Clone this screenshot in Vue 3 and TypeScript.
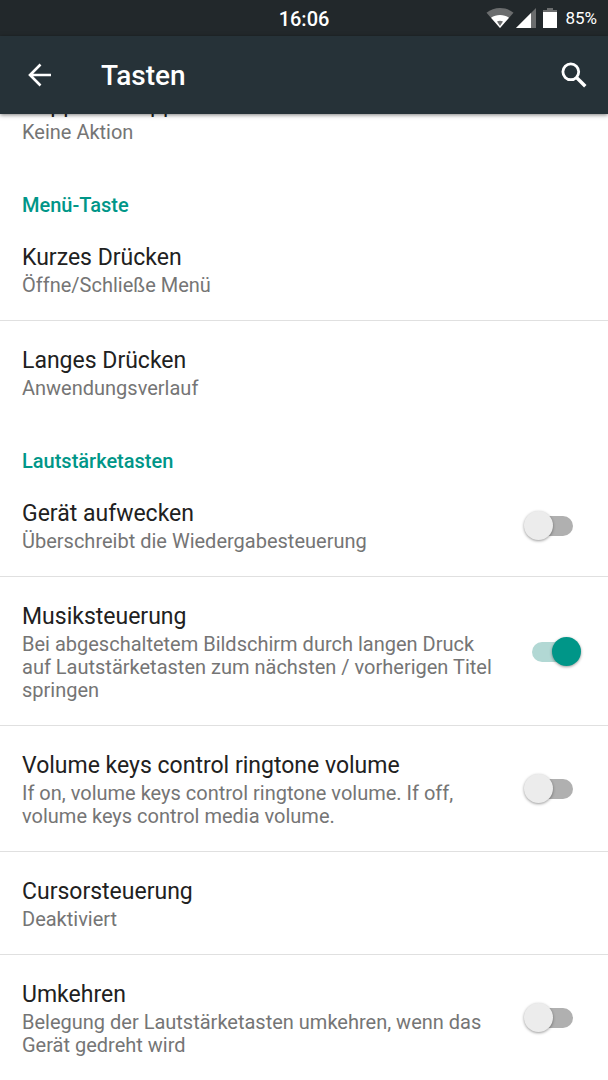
<script setup lang="ts">
import { reactive } from 'vue'

interface Preference {
  id: string
  title: string
  summary: string
  toggle?: boolean
  on?: boolean
}

interface Group {
  id: string
  heading?: string
  items: Preference[]
}

const groups = reactive<Group[]>([
  {
    id: 'home',
    items: [{ id: 'double-tap', title: 'Doppeltes Tippen', summary: 'Keine Aktion' }],
  },
  {
    id: 'menu',
    heading: 'Menü-Taste',
    items: [
      { id: 'menu-short', title: 'Kurzes Drücken', summary: 'Öffne/Schließe Menü' },
      { id: 'menu-long', title: 'Langes Drücken', summary: 'Anwendungsverlauf' },
    ],
  },
  {
    id: 'volume',
    heading: 'Lautstärketasten',
    items: [
      { id: 'wake', title: 'Gerät aufwecken', summary: 'Überschreibt die Wiedergabesteuerung', toggle: true, on: false },
      {
        id: 'music',
        title: 'Musiksteuerung',
        summary: 'Bei abgeschaltetem Bildschirm durch langen Druck auf Lautstärketasten zum nächsten / vorherigen Titel springen',
        toggle: true,
        on: true,
      },
      {
        id: 'ringtone',
        title: 'Volume keys control ringtone volume',
        summary: 'If on, volume keys control ringtone volume. If off, volume keys control media volume.',
        toggle: true,
        on: false,
      },
      { id: 'cursor', title: 'Cursorsteuerung', summary: 'Deaktiviert' },
      {
        id: 'swap',
        title: 'Umkehren',
        summary: 'Belegung der Lautstärketasten umkehren, wenn das Gerät gedreht wird',
        toggle: true,
        on: false,
      },
    ],
  },
])
</script>

<template>
  <div class="screen">
    <div class="status">
      <span class="clock">16:06</span>
      <div class="indicators">
        <svg class="wifi" viewBox="0 0 28 20" aria-hidden="true">
          <path d="M.5 4.800C8-1.500 20-1.500 27.500 4.800L14 20Z" fill="#6b6d6e" />
          <path d="M5 9.800C10 6.200 18 6.200 23 9.800L14 20Z" fill="#fff" />
          <path d="M11 13.500Q14 12 17 13.500L14 18Z" fill="#6b6d6e" />
        </svg>
        <svg class="signal" viewBox="0 0 20 20" aria-hidden="true">
          <path d="M20 0v20H0Z" fill="#6b6d6e" />
          <path d="M15 5v15H0Z" fill="#fff" />
        </svg>
        <svg class="battery" viewBox="0 0 14 20" aria-hidden="true">
          <path d="M4 0h6v2h4v4H0V2h4Z" fill="#6b6d6e" />
          <path d="M0 4h14v16H0Z" fill="#fff" />
        </svg>
        <span class="percent">85%</span>
      </div>
    </div>

    <header class="toolbar">
      <button class="icon-button" type="button" aria-label="Zurück">
        <svg class="back" viewBox="0 0 24 24" aria-hidden="true">
          <path d="M23 12H2M12.500 1.500L2 12l10.500 10.500" fill="none" stroke="#fff" stroke-width="2.600" />
        </svg>
      </button>
      <h1>Tasten</h1>
      <button class="icon-button" type="button" aria-label="Suchen">
        <svg class="search" viewBox="0 0 26 26" aria-hidden="true">
          <circle cx="9.800" cy="9.800" r="7.900" fill="none" stroke="#fff" stroke-width="2.800" />
          <path d="M15.500 15.500L24.300 24.300" stroke="#fff" stroke-width="3.400" />
        </svg>
      </button>
    </header>

    <main class="content">
      <div class="list">
        <section v-for="group in groups" :key="group.id">
          <h2 v-if="group.heading">{{ group.heading }}</h2>
          <ul>
            <li v-for="item in group.items" :key="item.id">
              <label v-if="item.toggle" class="row">
                <span class="text">
                  <span class="title">{{ item.title }}</span>
                  <span class="summary">{{ item.summary }}</span>
                </span>
                <input v-model="item.on" class="switch" type="checkbox" role="switch" />
              </label>
              <button v-else class="row" type="button">
                <span class="text">
                  <span class="title">{{ item.title }}</span>
                  <span class="summary">{{ item.summary }}</span>
                </span>
              </button>
            </li>
          </ul>
        </section>
      </div>
    </main>
  </div>
</template>

<style>
body {
  margin: 0;
  background: #fff;
}
</style>

<style scoped>
.screen {
  height: 100vh;
  display: flex;
  flex-direction: column;
  overflow: hidden;
  background: #fff;
  font-family: Roboto, "Noto Sans", sans-serif;
}

.status {
  flex: none;
  display: grid;
  grid-template-columns: 1fr auto 1fr;
  align-items: center;
  height: 36px;
  padding: 0 11px;
  background: #22282b;
  color: #fff;
}

.clock {
  grid-column: 2;
  padding-top: 2px;
  font-size: 20px;
  font-weight: 500;
  line-height: 24px;
}

.indicators {
  display: flex;
  justify-content: flex-end;
  align-items: center;
}

.wifi {
  width: 28px;
  height: 20px;
}

.signal {
  width: 20px;
  height: 20px;
  margin-left: 2px;
}

.battery {
  width: 14px;
  height: 20px;
  margin: 0 8px 0 7px;
}

.percent {
  font-size: 17px;
}

.toolbar {
  flex: none;
  position: relative;
  z-index: 1;
  display: flex;
  align-items: center;
  height: 78px;
  padding: 0 10px 0 16px;
  background: #263238;
  color: #fff;
  box-shadow: 0 1px 4px rgba(0, 0, 0, 0.5);
}

.toolbar h1 {
  flex: 1;
  margin: 0 0 0 37px;
  padding-top: 2px;
  font-size: 28px;
  font-weight: 500;
  line-height: 36px;
}

.icon-button {
  display: flex;
  align-items: center;
  justify-content: center;
  width: 48px;
  height: 48px;
  padding: 0;
  border: 0;
  background: none;
}

.back {
  width: 24px;
  height: 24px;
}

.search {
  width: 26px;
  height: 26px;
}

.content {
  flex: 1;
  min-height: 0;
  overflow: hidden;
}

/* The list is scrolled so that its first row is partly under the toolbar. */
.list {
  margin-top: -49px;
}

h2 {
  margin: 0;
  padding: 26px 22px 1px;
  color: #009688;
  font-size: 20px;
  font-weight: 500;
  line-height: 24px;
}

ul {
  margin: 0;
  padding: 0;
  list-style: none;
}

li + li {
  border-top: 1px solid #e0e0e0;
}

.row {
  display: flex;
  align-items: center;
  gap: 23px;
  box-sizing: border-box;
  width: 100%;
  padding: 24px 27px 23px 22px;
  border: 0;
  background: none;
  font: inherit;
  text-align: left;
}

.text {
  flex: 1;
  min-width: 0;
}

.title,
.summary {
  display: block;
}

.title {
  color: #212121;
  font-size: 23px;
  line-height: 32px;
}

.summary {
  color: #757575;
  font-size: 20px;
  line-height: 23px;
}

.switch {
  appearance: none;
  flex: none;
  position: relative;
  width: 57px;
  height: 30px;
  margin: 0;
}

.switch::before {
  content: "";
  position: absolute;
  top: 5px;
  left: 8px;
  width: 41px;
  height: 20px;
  border-radius: 10px;
  background: #b0b0b0;
}

.switch::after {
  content: "";
  position: absolute;
  top: 0;
  left: 0;
  width: 29px;
  height: 29px;
  border-radius: 50%;
  background: #ececec;
  box-shadow: 0 1px 3px rgba(0, 0, 0, 0.4);
}

.switch:checked::before {
  background: #b2d8d4;
}

.switch:checked::after {
  left: 28px;
  background: #009688;
}
</style>
